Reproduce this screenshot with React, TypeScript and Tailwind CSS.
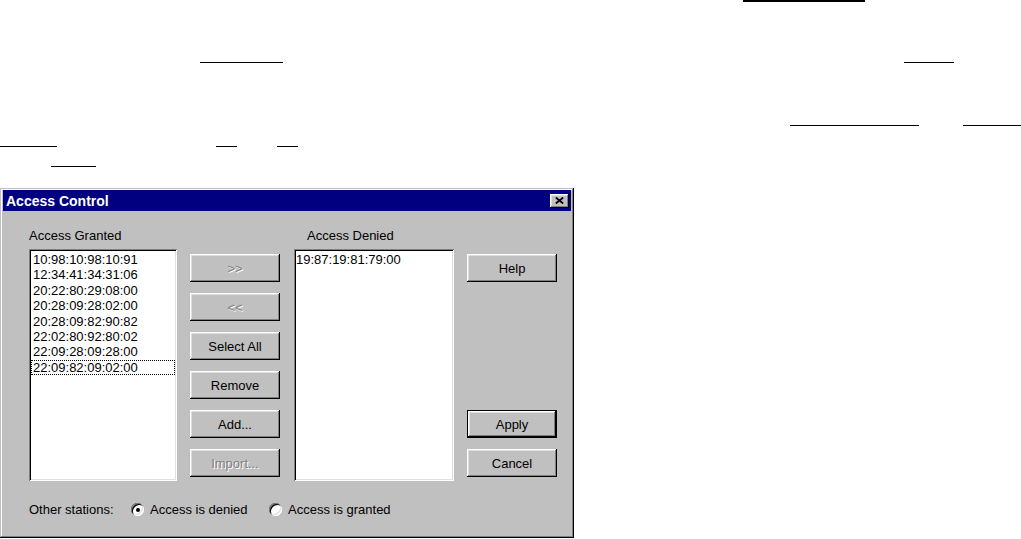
import clsx from "clsx";

const raised =
  "shadow-[inset_-1px_-1px_0_#000,inset_1px_1px_0_#fff,inset_-2px_-2px_0_#808080,inset_2px_2px_0_#dfdfdf]";
const defaultRaised =
  "shadow-[inset_0_0_0_1px_#000,inset_-2px_-2px_0_#000,inset_2px_2px_0_#fff,inset_-3px_-3px_0_#808080,inset_3px_3px_0_#dfdfdf]";
const sunken =
  "shadow-[inset_1px_1px_0_#808080,inset_-1px_-1px_0_#fff,inset_2px_2px_0_#000,inset_-2px_-2px_0_#dfdfdf]";

const granted = [
  "10:98:10:98:10:91",
  "12:34:41:34:31:06",
  "20:22:80:29:08:00",
  "20:28:09:28:02:00",
  "20:28:09:82:90:82",
  "22:02:80:92:80:02",
  "22:09:28:09:28:00",
  "22:09:82:09:02:00",
];

const Btn = ({ label, disabled, isDefault }: { label: string; disabled?: boolean; isDefault?: boolean }) => (
  <div
    className={clsx(
      "flex h-[28px] w-[90px] shrink-0 items-center justify-center bg-[#c0c0c0] text-[13px] leading-none",
      isDefault ? defaultRaised : raised,
      disabled ? "text-[#808080] [text-shadow:1px_1px_0_#fff]" : "text-black"
    )}
  >
    {label}
  </div>
);

const Radio = ({ label, checked }: { label: string; checked?: boolean }) => (
  <div className="flex items-center gap-[6px]">
    <div className={clsx("flex h-[13px] w-[13px] items-center justify-center rounded-full bg-white", sunken)}>
      {checked && <div className="h-[4px] w-[4px] rounded-full bg-black" />}
    </div>
    <span>{label}</span>
  </div>
);

const App = () => {
  return (
    <div className="h-[539px] w-[1021px] overflow-hidden bg-white font-['Liberation_Sans',Arial,sans-serif] text-black">
      {/* leftover underlines from the page above the dialog */}
      <div className="flex h-[2px]">
        <div className="ml-[743px] w-[122px] shrink-0 bg-black" />
      </div>
      <div className="mt-[60px] flex h-px">
        <div className="ml-[200px] w-[83px] shrink-0 bg-black" />
        <div className="ml-[621px] w-[50px] shrink-0 bg-black" />
      </div>
      <div className="mt-[62px] flex h-px">
        <div className="ml-[790px] w-[129px] shrink-0 bg-black" />
        <div className="ml-[44px] w-[58px] shrink-0 bg-black" />
      </div>
      <div className="mt-[20px] flex h-px">
        <div className="w-[57px] shrink-0 bg-black" />
        <div className="ml-[159px] w-[21px] shrink-0 bg-black" />
        <div className="ml-[40px] w-[21px] shrink-0 bg-black" />
      </div>
      <div className="mt-[19px] flex h-px">
        <div className="ml-[51px] w-[45px] shrink-0 bg-black" />
      </div>

      {/* dialog */}
      <div
        className="mt-[21px] flex h-[350px] w-[574px] flex-col bg-[#c0c0c0] pt-[2px] pr-[3px] pl-[3px] shadow-[inset_-1px_-1px_0_#000,inset_1px_1px_0_#c0c0c0,inset_-2px_-2px_0_#808080,inset_2px_2px_0_#fff]"
      >
        <div className="flex h-[21px] shrink-0 items-center justify-between bg-[#000080] pr-[2px] pl-[3px]">
          <span className="text-[14px] leading-none font-bold text-white">Access Control</span>
          <div className={clsx("flex h-[14px] w-[19px] items-center justify-center bg-[#c0c0c0]", raised)}>
            <svg width="9" height="7" viewBox="0 0 9 7">
              <path d="M0.8 0.5 L8.2 6.5 M8.2 0.5 L0.8 6.5" stroke="#000" strokeWidth="1.8" fill="none" />
            </svg>
          </div>
        </div>

        <div className="flex flex-col pt-[17px] pl-[26px] text-[13px]">
          <div className="flex">
            <div className="flex w-[148px] flex-col">
              <div className="h-[15px] leading-[15px]">Access Granted</div>
              <div className={clsx("mt-[6px] h-[232px] bg-white p-[2px]", sunken)}>
                <div className="pt-px">
                  {granted.map((item, i) => (
                    <div
                      key={item}
                      className={clsx(
                        "h-[15.4px] pl-[2px] leading-[15.4px]",
                        i === granted.length - 1 ? "outline-1 -outline-offset-1 outline-black outline-dotted" : ""
                      )}
                    >
                      {item}
                    </div>
                  ))}
                </div>
              </div>
            </div>

            <div className="mt-[26px] ml-[13px] flex flex-col gap-[11px]">
              <Btn label=">>" disabled />
              <Btn label="<<" disabled />
              <Btn label="Select All" />
              <Btn label="Remove" />
              <Btn label="Add..." />
              <Btn label="Import..." disabled />
            </div>

            <div className="ml-[14px] flex w-[160px] flex-col">
              <div className="h-[15px] pl-[13px] leading-[15px]">Access Denied</div>
              <div className={clsx("mt-[6px] h-[232px] bg-white p-[2px]", sunken)}>
                <div className="h-[15.4px] pt-px leading-[15.4px]">19:87:19:81:79:00</div>
              </div>
            </div>

            <div className="mt-[26px] ml-[13px] flex flex-col">
              <Btn label="Help" />
              <div className="mt-[128px]">
                <Btn label="Apply" isDefault />
              </div>
              <div className="mt-[11px]">
                <Btn label="Cancel" />
              </div>
            </div>
          </div>

          <div className="mt-[21px] flex h-[15px] items-center leading-[15px]">
            <span className="w-[102px] shrink-0">Other stations:</span>
            <div className="w-[138px] shrink-0">
              <Radio label="Access is denied" checked />
            </div>
            <Radio label="Access is granted" />
          </div>
        </div>
      </div>
    </div>
  );
};

export default App;
